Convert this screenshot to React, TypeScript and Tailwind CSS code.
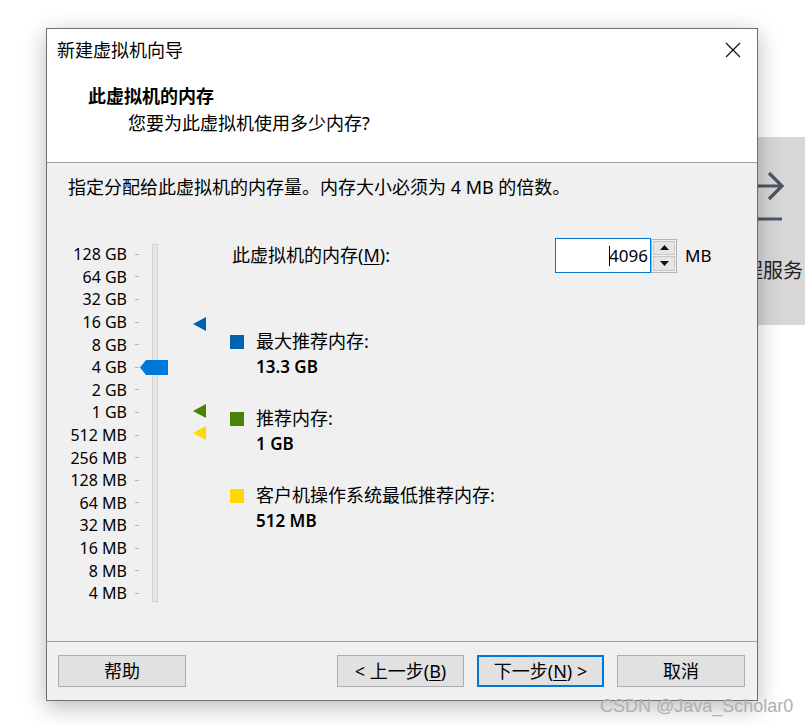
import React from "react";

const FONT = { fontFamily: '"Noto Sans", "Noto Sans CJK SC", sans-serif' };

const labels = [
  "128 GB", "64 GB", "32 GB", "16 GB", "8 GB", "4 GB", "2 GB", "1 GB",
  "512 MB", "256 MB", "128 MB", "64 MB", "32 MB", "16 MB", "8 MB", "4 MB",
];

function Tri({ color }: { color: string }) {
  return (
    <svg width="13" height="14" viewBox="0 0 13 14">
      <polygon points="0,7 13,0 13,14" fill={color} />
    </svg>
  );
}

function LegendItem({ color, label, value, className }: { color: string; label: string; value: string; className: string }) {
  return (
    <div className={"flex " + className}>
      <div className={"mt-[6px] w-[14px] h-[14px] " + color} />
      <div className="ml-[12px] flex flex-col">
        <div className="leading-[25px] text-[18px] text-black">{label}</div>
        <div className="leading-[25px] text-[17px] font-semibold text-black">{value}</div>
      </div>
    </div>
  );
}

export default function App() {
  return (
    <div className="relative w-[805px] h-[724px] bg-white overflow-hidden" style={FONT}>
      {/* background window panel */}
      <div className="absolute left-[690px] top-[137px] w-[115px] h-[188px] bg-[#d7d7d7] flex flex-col pl-[55px] pt-[34px]">
        <svg width="40" height="52" viewBox="0 0 40 52" className="ml-[11px]">
          <path d="M0 15 H26 M13 2 L26 15 L13 28" stroke="#4a5866" strokeWidth="3.2" fill="none" />
          <path d="M0 48 H26" stroke="#4a5866" strokeWidth="3" fill="none" />
        </svg>
        <div className="mt-[34px] ml-[-2px] text-[20px] leading-[28px] text-[#222] whitespace-nowrap">程服务</div>
      </div>

      {/* dialog */}
      <div className="absolute left-[46px] top-[28px] w-[712px] h-[673px] border border-[#707070] bg-[#f0f0f0] flex flex-col shadow-[0_6px_22px_rgba(0,0,0,0.28)]">
        {/* header */}
        <div className="h-[134px] shrink-0 bg-white border-b border-[#a0a0a0] flex flex-col">
          <div className="h-[42px] flex items-center justify-between pl-[10px] pr-[16px]">
            <span className="text-[18px] text-black">新建虚拟机向导</span>
            <svg width="16" height="16" viewBox="0 0 16 16">
              <path d="M1 1 L15 15 M15 1 L1 15" stroke="#111" strokeWidth="1.2" />
            </svg>
          </div>
          <div className="mt-[13px] pl-[41px] leading-[24px] text-[18px] font-bold text-black">此虚拟机的内存</div>
          <div className="mt-[3px] pl-[81px] leading-[24px] text-[18px] text-black">您要为此虚拟机使用多少内存?</div>
        </div>

        {/* body */}
        <div className="flex-1 flex flex-col pt-[12px]">
          <div className="pl-[21px] leading-[24px] text-[18px] text-black">
            指定分配给此虚拟机的内存量。内存大小必须为 4 MB 的倍数。
          </div>
          <div className="relative mt-[37px] flex">
            <div className="flex flex-col pt-[7px]">
              {labels.map((l) => (
                <div key={l} className="h-[22.6px] w-[93px] flex items-center justify-end gap-[8px] pr-[1px]">
                  <span className="text-[16px] text-black leading-none">{l}</span>
                  <span className="w-[4px] h-px bg-[#b4b4b4]" />
                </div>
              ))}
            </div>
            <div className="ml-[12px] mt-[8px] w-[6px] h-[358px] bg-[#e6e8e8] border border-[#d2d2d2]" />

            {/* thumb */}
            <svg className="absolute left-[93px] top-[124px]" width="28" height="15" viewBox="0 0 28 15">
              <polygon points="0,7.5 6,0 28,0 28,15 6,15" fill="#0078d7" />
            </svg>
            {/* markers */}
            <div className="absolute left-[146px] top-[81px]"><Tri color="#0063b1" /></div>
            <div className="absolute left-[146px] top-[168px]"><Tri color="#498205" /></div>
            <div className="absolute left-[146px] top-[190px]"><Tri color="#ffd800" /></div>

            <div className="ml-[72px] flex flex-col">
              <div className="mt-[2px] h-[35px] flex items-center">
                <div className="w-[325px] pl-[2px] text-[18px] text-black">
                  此虚拟机的内存(<span className="underline underline-offset-2">M</span>):
                </div>
                <div className="relative w-[96px] h-[35px] bg-white border border-[#0078d7] flex items-center justify-end pr-[2px]">
                  <span className="absolute left-[53px] top-[7px] w-px h-[20px] bg-black" />
                  <span className="text-[17px] text-black">4096</span>
                </div>
                <div className="w-[26px] h-[34px] border border-[#b4b4b4] bg-[#f0f0f0] flex flex-col p-px gap-px">
                  <div className="flex-1 bg-[#e5e5e5] border border-[#c8c8c8] flex items-center justify-center">
                    <svg width="9" height="5" viewBox="0 0 9 5"><polygon points="0,5 4.5,0 9,5" fill="#111" /></svg>
                  </div>
                  <div className="flex-1 bg-[#e5e5e5] border border-[#c8c8c8] flex items-center justify-center">
                    <svg width="9" height="5" viewBox="0 0 9 5"><polygon points="0,0 9,0 4.5,5" fill="#111" /></svg>
                  </div>
                </div>
                <span className="ml-[8px] text-[17px] text-black">MB</span>
              </div>
              <LegendItem className="mt-[56px]" color="bg-[#0063b1]" label="最大推荐内存:" value="13.3 GB" />
              <LegendItem className="mt-[27px]" color="bg-[#498205]" label="推荐内存:" value="1 GB" />
              <LegendItem className="mt-[27px]" color="bg-[#ffd800]" label="客户机操作系统最低推荐内存:" value="512 MB" />
            </div>
          </div>
        </div>

        {/* footer */}
        <div className="h-[59px] shrink-0 border-t border-[#a0a0a0] pt-[13px] flex">
          <button className="ml-[11px] w-[128px] h-[32px] bg-[#e1e1e1] border border-[#adadad] text-[18px] text-black">帮助</button>
          <div className="flex-1" />
          <button className="w-[127px] h-[32px] bg-[#e1e1e1] border border-[#adadad] text-[18px] text-black">
            &lt; 上一步(<span className="underline underline-offset-2">B</span>)
          </button>
          <button className="ml-[13px] w-[127px] h-[32px] bg-[#e1e1e1] border-2 border-[#0078d7] text-[18px] text-black">
            下一步(<span className="underline underline-offset-2">N</span>) &gt;
          </button>
          <button className="ml-[13px] mr-[12px] w-[128px] h-[32px] bg-[#e1e1e1] border border-[#adadad] text-[18px] text-black">取消</button>
        </div>
      </div>

      {/* watermark */}
      <div
        className="absolute left-[600px] top-[694px] text-[18px] leading-[24px] text-[#b0b0b0] whitespace-nowrap"
        style={{ fontFamily: '"Liberation Sans", Arial, sans-serif' }}
      >
        CSDN @Java_Scholar0
      </div>
    </div>
  );
}
